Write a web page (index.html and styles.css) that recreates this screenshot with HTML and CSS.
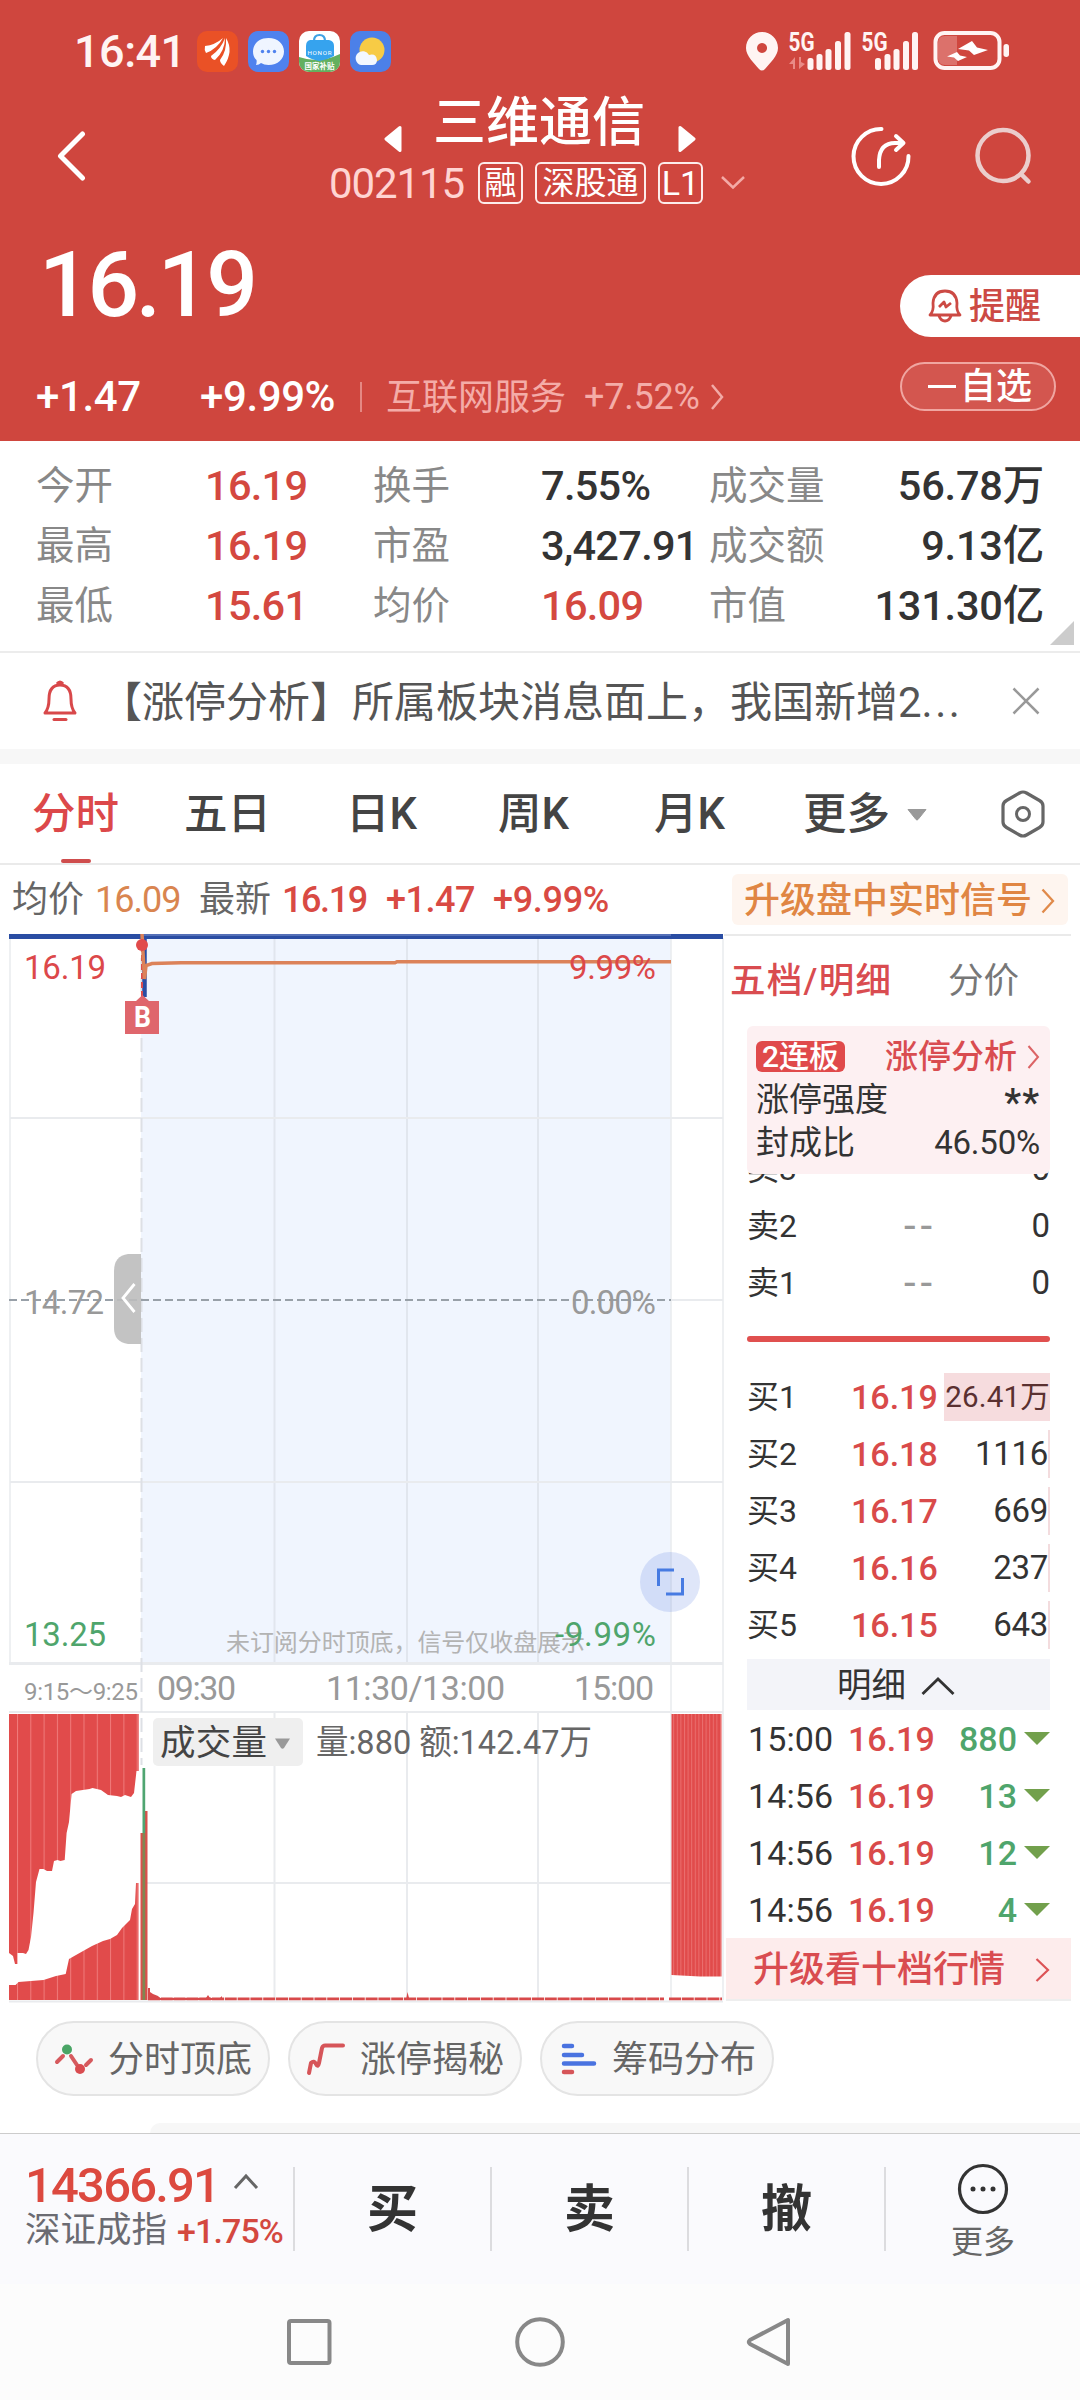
FILE: index.html
```html
<!DOCTYPE html>
<html lang="zh-CN">
<head>
    <meta charset="UTF-8">
    <meta name="viewport" content="width=device-width, initial-scale=1.0">
    <title>三维通信 002115</title>
    <link rel="stylesheet" href="styles.css">
</head>
<body>
    <header class="header">
        <div class="status-bar">
            <span class="clock">16:41</span>
            <svg class="app-icon" viewBox="0 0 41 41">
                <rect width="41" height="41" rx="10" fill="#ea5126"/>
                <path d="M8 15 Q18 14 26 7 Q20 18 9 22 Q7 19 8 15Z M14 25 Q24 18 28 7 Q28 20 18 29 Q14 28 14 25Z M23 29 Q30 20 29 7 Q37 20 27 35 Q23 32 23 29Z" fill="#fff"/>
            </svg>
            <svg class="app-icon" viewBox="0 0 41 41">
                <rect width="41" height="41" rx="10" fill="#4f82ee"/>
                <path d="M20.500 7 C30 7 36 13 36 20.500 C36 28 30 34 20.500 34 Q16 34 13 32 Q11 34 8 34 Q9 31 8.500 29 Q5 26 5 20.500 C5 13 11 7 20.500 7Z" fill="#eff5ff"/>
                <circle cx="14.500" cy="20.500" r="1.700" fill="#4f82ee"/><circle cx="20.500" cy="20.500" r="1.700" fill="#4f82ee"/><circle cx="26.500" cy="20.500" r="1.700" fill="#4f82ee"/>
            </svg>
            <svg class="app-icon" viewBox="0 0 41 41">
                <rect width="41" height="41" rx="10" fill="#fff"/>
                <path d="M0 26 Q20 33 41 23 V31 A10 10 0 0 1 31 41 H10 A10 10 0 0 1 0 31Z" fill="#64b05f"/>
                <path d="M15 10 Q15 4 20.500 4 Q26 4 26 10" fill="none" stroke="#3fa2e4" stroke-width="2.200"/>
                <path d="M11 9 H30 Q35 10 35 15 V25 Q28 29 20.500 30 Q13 29 7 25 V15 Q7 10 11 9Z" fill="#36a3ee"/>
                <text x="20.500" y="24" font-size="6.200" fill="#fff" text-anchor="middle" textLength="24">HONOR</text>
                <text x="20.500" y="38" font-size="7.500" font-weight="700" fill="#fff" text-anchor="middle">国家补贴</text>
            </svg>
            <svg class="app-icon" viewBox="0 0 41 41">
                <rect width="41" height="41" rx="10" fill="#4c80e8"/>
                <circle cx="22" cy="19" r="12.500" fill="#f7cb45"/>
                <path d="M11 34 A7 7 0 0 1 8 22 A7 7 0 0 1 19 24 Q26 22 27 29 Q27 34 22 34Z" fill="#f3f8ff"/>
            </svg>
            <svg class="signal" width="266" height="42" viewBox="745 30 266 42">
                <path fill-rule="evenodd" d="M762 32 C771 32 778 39 778 48 C778 56 770 63 765 69 Q762 72 759 69 C754 63 746 56 746 48 C746 39 753 32 762 32Z M762 43 a5 5 0 1 0 .1 0Z" fill="#fff4f3"/>
                <g fill="#fff4f3" font-size="25" font-weight="700">
                    <text x="788.500" y="51" textLength="26" lengthAdjust="spacingAndGlyphs">5G</text>
                    <text x="861.500" y="51" textLength="26" lengthAdjust="spacingAndGlyphs">5G</text>
                </g>
                <path d="M789 64 L795 57 V69 H793 V64Z M805 64 L799 69 V57 H801 V62Z" fill="#e98b86"/>
                <g fill="#fff4f3">
                    <rect x="807.500" y="58" width="6" height="12" rx="2.500"/><rect x="816.500" y="54" width="6" height="16" rx="2.500"/><rect x="825.500" y="49" width="6" height="21" rx="2.500"/><rect x="835" y="41" width="6" height="29" rx="2.500"/><rect x="844.500" y="32" width="6" height="38" rx="2.500"/>
                    <rect x="875" y="58" width="6" height="12" rx="2.500"/><rect x="884.500" y="54" width="6" height="16" rx="2.500"/><rect x="893.500" y="49" width="6" height="21" rx="2.500"/><rect x="903" y="41" width="6" height="29" rx="2.500"/><rect x="912" y="32" width="6" height="38" rx="2.500"/>
                </g>
                <path d="M945 36 H957 V65 H945 Q938 65 938 58 V43 Q938 36 945 36Z" fill="#dc716b"/>
                <rect x="935.500" y="33" width="64" height="35" rx="9" fill="none" stroke="#fff4f3" stroke-width="4"/>
                <rect x="1003.500" y="44" width="5.500" height="13" rx="2.700" fill="#fff4f3"/>
                <path d="M972 41 L958 49 L969 50.500 L974 55 L988 50 L977 47.500Z M957 52 L947 56.500 L954 57.500 L958 61 L967 57 L960 55.500Z" fill="#fff"/>
            </svg>
        </div>

        <div class="nav-row">
            <svg class="back" width="30" height="52" viewBox="57 130 30 52"><path d="M82.500 134 L60.500 156 L82.500 178" class="line white w5"/></svg>
            <div class="stock">
                <div class="stock-name">
                    <svg width="18" height="28" viewBox="0 0 18 28"><path d="M2 14 L16 2.500 V25.500Z" fill="#fff" stroke="#fff" stroke-width="3" stroke-linejoin="round"/></svg>
                    <h1>三维通信</h1>
                    <svg width="18" height="28" viewBox="0 0 18 28"><path d="M16 14 L2 2.500 V25.500Z" fill="#fff" stroke="#fff" stroke-width="3" stroke-linejoin="round"/></svg>
                </div>
                <div class="stock-code">
                    <span class="code">002115</span>
                    <span class="tag">融</span><span class="tag tag-wide">深股通</span><span class="tag tag-l1">L1</span>
                    <svg width="26" height="16" viewBox="0 0 26 16"><path d="M2 2 L13 12.500 L24 2" fill="none" stroke="#f4aaa6" stroke-width="2.500"/></svg>
                </div>
            </div>
            <svg class="share" width="62" height="62" viewBox="850 125 62 62">
                <path d="M881.500 129 A27.500 27.500 0 1 0 908.500 156" class="line white w4"/>
                <path d="M879 167 V160 Q880 143 895 143 H903 M896 136 L903.500 143 L896 150" class="line white w4"/>
            </svg>
            <svg class="search" width="60" height="62" viewBox="973 125 60 62">
                <circle cx="1003" cy="155.500" r="25.500" fill="none" stroke="#ebcdcc" stroke-width="4.500"/>
                <path d="M1021 174 L1028.500 181.500" class="line" stroke="#ebcdcc" stroke-width="4.500"/>
            </svg>
        </div>

        <div class="quote">
            <div class="price">16.19</div>
            <div class="changes">
                <span class="chg">+1.47</span><span class="pct">+9.99%</span>
                <i class="bar"></i>
                <span class="sector">互联网服务</span><span class="sector-pct">+7.52%</span>
                <svg width="15" height="26" viewBox="0 0 15 26"><path d="M2 1 L12 13 L2 25" fill="none" stroke="#f2aaa6" stroke-width="2.500"/></svg>
            </div>
        </div>
        <div class="actions">
            <div class="remind">
                <svg width="34" height="36" viewBox="0 0 34 36"><path d="M2 27 Q6 23 5 15 Q6 3 17 3 Q28 3 29 15 Q28 23 32 27Z M11 28 Q13 33 17 33 Q21 33 23 28 M11 19 L16 14 L18 19 L23 15" fill="none" stroke="#cc4a44" stroke-width="2.800" stroke-linejoin="round"/></svg>
                <span>提醒</span>
            </div>
            <div class="fav"><i></i><span>自选</span></div>
        </div>
    </header>

    <section class="stats">
        <span class="k">今开</span><span class="v red">16.19</span><span class="k">换手</span><span class="v">7.55%</span><span class="k">成交量</span><span class="v end">56.78万</span>
        <span class="k">最高</span><span class="v red">16.19</span><span class="k">市盈</span><span class="v">3,427.91</span><span class="k">成交额</span><span class="v end">9.13亿</span>
        <span class="k">最低</span><span class="v red">15.61</span><span class="k">均价</span><span class="v red">16.09</span><span class="k">市值</span><span class="v end">131.30亿</span>
        <i class="corner"></i>
    </section>

    <section class="notice">
        <svg width="36" height="44" viewBox="0 0 36 44"><path d="M3 34 Q7 29 7 20 Q7 6 18 6 Q29 6 29 20 Q29 29 33 34Z M15 5 Q18 1 21 5" fill="none" stroke="#d8484a" stroke-width="3" stroke-linejoin="round"/><path d="M12 40.500 H24" stroke="#d8484a" stroke-width="3" stroke-linecap="round"/></svg>
        <span class="notice-text">【涨停分析】所属板块消息面上，我国新增2<span class="dots">...</span></span>
        <svg width="28" height="28" viewBox="0 0 28 28"><path d="M1.500 1.500 L26.500 26.500 M26.500 1.500 L1.500 26.500" stroke="#999" stroke-width="2.500"/></svg>
    </section>

    <nav class="tabs">
        <span class="tab active">分时</span><span class="tab">五日</span><span class="tab">日K</span><span class="tab">周K</span><span class="tab">月K</span>
        <span class="tab">更多<svg width="22" height="14" viewBox="0 0 22 14"><path d="M2 1.500 H20 L12 11.500 Q11 12.500 10 11.500Z" fill="#999" stroke="#999" stroke-linejoin="round"/></svg></span>
        <svg class="gear" width="46" height="50" viewBox="0 0 46 50"><path d="M19.500 4 Q23 2 26.500 4 L39.500 11.500 Q43 13.500 43 17 V33 Q43 36.500 39.500 38.500 L26.500 46 Q23 48 19.500 46 L6.500 38.500 Q3 36.500 3 33 V17 Q3 13.500 6.500 11.500Z" fill="none" stroke="#666" stroke-width="3.200"/><circle cx="23" cy="25" r="6.500" fill="none" stroke="#666" stroke-width="3"/></svg>
    </nav>

    <div class="info">
        <span class="lbl">均价</span><span class="num orange">16.09</span>
        <span class="lbl second">最新</span><span class="num n1">16.19</span><span class="num n2">+1.47</span><span class="num n3">+9.99%</span>
        <div class="upgrade-top">升级盘中实时信号<svg width="14" height="26" viewBox="0 0 14 26"><path d="M1.500 1.500 L12 13 L1.500 24.500" fill="none" stroke="#e08a4a" stroke-width="2.300"/></svg></div>
    </div>

    <main class="board">
        <svg class="chart" width="724" height="1069" viewBox="0 934 724 1069">
            <defs>
                <pattern id="stripes" width="3.600" height="10" patternUnits="userSpaceOnUse"><rect width="3.600" height="10" fill="#e14b4b"/><rect width="1" height="10" fill="#ea6f6f"/></pattern>
                <pattern id="auction" x="17" width="13.300" height="10" patternUnits="userSpaceOnUse"><rect width="13.300" height="10" fill="#e14b4b"/><rect width="1" height="10" fill="#f07b7b"/></pattern>
            </defs>
            <rect x="141" y="939" width="530" height="724" fill="#f0f5fe"/>

            <!-- grid -->
            <g stroke="#e9ebee" stroke-width="2" fill="none">
                <path d="M10 938 V1663 M723 938 V2000 M671 938 V2000" stroke-width="1.500"/>
                <path d="M274.500 938 V1663 M407 938 V1663 M538 938 V1663" stroke="#e1e6ee"/>
                <path d="M10 1118 H723 M10 1482 H723 M671 1300 H723"/>
                <path d="M9 1663.500 H723" stroke-width="3"/>
                <path d="M274.500 1713 V2000 M407 1713 V2000 M538 1713 V2000 M141 1883 H671 M9 1712 H723 M9 2001.500 H723"/>
                <path d="M141.500 938 V1765" stroke="#dde0e5" stroke-dasharray="14 6"/>
            </g>
            <path d="M9 1300 H671" stroke="#98a0a8" stroke-width="2" stroke-dasharray="8 4"/>

            <!-- price line -->
            <path d="M9 936.500 H723" stroke="#2a4da3" stroke-width="5"/>
            <path d="M142 935 H671" stroke="#8095cd" stroke-width="1"/>
            <path d="M144.500 938 V997" stroke="#2a4da3" stroke-width="4.500"/>
            <path d="M142 946 V1000" stroke="#dc4c4c" stroke-width="2" stroke-dasharray="6 3"/>
            <path d="M142 934 L144.500 979 L146 965.500 L152 963.500 L181 962.800 H395 L397 961.800 H671" fill="none" stroke="#dc8259" stroke-width="3.500"/>
            <circle cx="142" cy="945" r="6" fill="#e14b4b"/>
            <path d="M125 1001 H136 L142.500 995 L149 1001 H159 V1034 H125Z" fill="#df666c"/>
            <text x="134" y="1027" class="mark" textLength="17" lengthAdjust="spacingAndGlyphs">B</text>

            <g class="axis">
                <text x="24" y="979" class="up" textLength="82">16.19</text>
                <text x="569" y="979" class="up" textLength="87">9.99%</text>
                <text x="24" y="1314" textLength="80">14.72</text>
                <text x="571" y="1314" textLength="85">0.00%</text>
                <text x="24" y="1646" class="down" textLength="82">13.25</text>
                <text x="226" y="1651" class="tip" textLength="359">未订阅分时顶底，信号仅收盘展示</text>
                <text x="555" y="1646" class="down" textLength="101">-9.99%</text>
            </g>
            <path d="M141 1254 H128 Q114 1256 114 1271 V1328 Q114 1342 128 1344 H141Z" fill="#bdbdbd" fill-opacity=".9"/>
            <path d="M134.500 1284 L123 1298 L134.500 1312" fill="none" stroke="#fff" stroke-width="2.800"/>
            <circle cx="670" cy="1582" r="30" fill="#4169dc" fill-opacity=".17"/>
            <path d="M658.500 1586 V1570 H674 M682.500 1578 V1594 H666" fill="none" stroke="#477be2" stroke-width="3"/>

            <g class="time">
                <text x="24" y="1700" class="small" textLength="114">9:15～9:25</text>
                <text x="157" y="1700" textLength="79">09:30</text>
                <text x="326" y="1700" textLength="179">11:30/13:00</text>
                <text x="574" y="1700" textLength="80">15:00</text>
            </g>

            <!-- volume -->
            <path fill="url(#auction)" d="M9 1714 V1953 L13 1956 L15 1964 H17.500 V1953 H23 L26 1954 L28.500 1950 L31 1937 L33.500 1913 L36 1882 L39.500 1869 H43.500 L47 1871 H52 L54 1861 L57.500 1860 L60.500 1861 L64.700 1860 L66.600 1833 L69 1822 L71.600 1794 L76 1791 L89.500 1789 L92.500 1788 L101 1790 L108 1795 L117 1796 L121 1797 L125 1795 L131 1797 L134 1793 L136.500 1771 H138.700 V1714Z"/>
            <path fill="url(#auction)" d="M9 2000 V1985 H15.500 L18.500 1982 L43.500 1980 L56 1976 L65.700 1974 L69 1959 L76 1955 L92 1946 L103 1941 L110 1939 L117 1935 L122 1928 L130 1920 L132 1909 L135 1904 L136 1883 H138.500 V2000Z"/>
            <rect x="140.500" y="1833" width="3" height="167" fill="#d9504c"/>
            <rect x="144.500" y="1811" width="3" height="189" fill="#d9504c"/>
            <rect x="142.500" y="1768" width="2.700" height="65" fill="#4fa571"/>
            <rect x="142.500" y="1833" width="2.700" height="167" fill="#7f8752"/>
            <path d="M148 2000 V1988 H150 V1992 L153 1994 L158 1996 L160 1998 H206 L208 1995 L210 1998 H220 L222 1996 V2000Z M406 2000 L407.500 1992 L409.500 2000Z" fill="#d8494a"/>
            <path d="M148 1998.800 H664 M669 1998.800 H722" stroke="#d8494a" stroke-width="2.800" stroke-dasharray="12 .8"/>
            <path d="M671.500 1714 H721.500 V1976.500 H700 L671.500 1975Z" fill="url(#stripes)"/>

            <rect x="153" y="1718" width="150" height="48" rx="5" fill="#efefef"/>
            <text x="160" y="1755" class="vol-btn" textLength="107">成交量</text>
            <path d="M275 1738.500 H290 L284 1748 Q282.500 1749.500 281 1748Z" fill="#999"/>
            <text x="316" y="1754" class="vol-text" textLength="276" lengthAdjust="spacingAndGlyphs">量:880 额:142.47万</text>
        </svg>

        <aside class="depth">
            <div class="depth-tabs"><span class="on">五档/明细</span><span>分价</span></div>
            <div class="sell">
                <div class="limit-card">
                    <div class="limit-row"><span class="badge">2连板</span><span class="link">涨停分析<svg width="13" height="24" viewBox="0 0 13 24"><path d="M1.500 1 L11 12 L1.500 23" fill="none" stroke="#dc6466" stroke-width="2"/></svg></span></div>
                    <div class="limit-row r2"><span>涨停强度</span><span class="stars">**</span></div>
                    <div class="limit-row r3"><span>封成比</span><span class="ratio">46.50%</span></div>
                </div>
                <div class="row"><span class="side">卖3</span><span class="none">--</span><span class="qty">0</span></div>
                <div class="row"><span class="side">卖2</span><span class="none">--</span><span class="qty">0</span></div>
                <div class="row"><span class="side">卖1</span><span class="none">--</span><span class="qty">0</span></div>
            </div>
            <i class="split"></i>
            <div class="row buy"><span class="side">买1</span><span class="p">16.19</span><span class="qty big">26.41万</span></div>
            <div class="row buy"><span class="side">买2</span><span class="p">16.18</span><span class="qty">1116</span></div>
            <div class="row buy"><span class="side">买3</span><span class="p">16.17</span><span class="qty">669</span></div>
            <div class="row buy"><span class="side">买4</span><span class="p">16.16</span><span class="qty">237</span></div>
            <div class="row buy"><span class="side">买5</span><span class="p">16.15</span><span class="qty">643</span></div>
            <div class="detail-head">明细<svg width="34" height="20" viewBox="0 0 34 20"><path d="M1.500 18 L17 3 L32.500 18" fill="none" stroke="#333" stroke-width="2.800"/></svg></div>
            <div class="tick"><span class="t">15:00</span><span class="p">16.19</span><span class="q">880</span><i></i></div>
            <div class="tick"><span class="t">14:56</span><span class="p">16.19</span><span class="q">13</span><i></i></div>
            <div class="tick"><span class="t">14:56</span><span class="p">16.19</span><span class="q">12</span><i></i></div>
            <div class="tick"><span class="t">14:56</span><span class="p">16.19</span><span class="q">4</span><i></i></div>
            <div class="upgrade-ten">升级看十档行情<svg width="15" height="24" viewBox="0 0 15 24"><path d="M1.500 1 L13 12 L1.500 23" fill="none" stroke="#dc5356" stroke-width="2.200"/></svg></div>
        </aside>
    </main>

    <section class="tools">
        <div class="chip">
            <svg width="40" height="34" viewBox="0 0 40 34"><path d="M3 20 L9 14 M17 14 L23 23 M32 23 L37 18" stroke="#d65a5e" stroke-width="4" stroke-linecap="round"/><circle cx="13" cy="7.500" r="5" fill="#4aa566"/><circle cx="26" cy="27" r="5" fill="#d94c50"/></svg>
            <span>分时顶底</span>
        </div>
        <div class="chip">
            <svg width="40" height="34" viewBox="0 0 40 34"><path d="M3 31 L5 21 Q8 18 10 22 Q12 26 13 21 L16 6 Q17 3.500 19 3.500 H37" fill="none" stroke="#d65559" stroke-width="4" stroke-linecap="round" stroke-linejoin="round"/></svg>
            <span>涨停揭秘</span>
        </div>
        <div class="chip">
            <svg width="40" height="34" viewBox="0 0 40 34"><path d="M6 4 H14 M6 13 H24 M6 21.500 H36" stroke="#4a73e0" stroke-width="4.500" stroke-linecap="round"/><path d="M6 30 H14" stroke="#d65559" stroke-width="4.500" stroke-linecap="round"/></svg>
            <span>筹码分布</span>
        </div>
    </section>
    <div class="next-panel"></div>

    <footer class="trade-bar">
        <div class="index">
            <div class="index-value">14366.91<svg width="26" height="17" viewBox="0 0 26 17"><path d="M2 15 L13 3 L24 15" fill="none" stroke="#666" stroke-width="3"/></svg></div>
            <div class="index-name">深证成指<span>+1.75%</span></div>
        </div>
        <div class="trade">买</div>
        <div class="trade">卖</div>
        <div class="trade">撤</div>
        <div class="more">
            <svg width="52" height="52" viewBox="0 0 52 52"><circle cx="26" cy="26" r="23.500" fill="none" stroke="#333" stroke-width="3.200"/><circle cx="16" cy="26" r="2.500" fill="#333"/><circle cx="26" cy="26" r="2.500" fill="#333"/><circle cx="36" cy="26" r="2.500" fill="#333"/></svg>
            <span>更多</span>
        </div>
    </footer>

    <div class="system-nav">
        <svg width="50" height="54" viewBox="0 0 50 54"><rect x="5" y="6" width="40.500" height="42" rx="2" fill="none" stroke="#888" stroke-width="4"/></svg>
        <svg width="54" height="54" viewBox="0 0 54 54"><circle cx="27" cy="27" r="22.800" fill="none" stroke="#888" stroke-width="4"/></svg>
        <svg width="50" height="54" viewBox="0 0 50 54"><path d="M42 5 V49 L4 29 Q1.500 27 4 25Z" fill="none" stroke="#888" stroke-width="4" stroke-linejoin="round"/></svg>
    </div>
</body>
</html>
```
FILE: styles.css
```css
* {
    box-sizing: border-box;
}

body {
    margin: 0;
    width: 1080px;
    height: 2400px;
    overflow: hidden;
    background: #fff;
    color: #333;
    font-family: Roboto, "Noto Sans CJK SC", sans-serif;
    line-height: 1;
}

svg {
    display: block;
    flex: none;
}

span, h1 {
    white-space: nowrap;
}

.line {
    fill: none;
    stroke-linecap: round;
    stroke-linejoin: round;
}
.white { stroke: #fff; }
.w4 { stroke-width: 4; }
.w5 { stroke-width: 5; }

/* header */
.header {
    position: relative;
    height: 441px;
    background: #cf463e;
    color: #fff;
}
.status-bar {
    display: flex;
    align-items: flex-start;
    height: 92px;
    padding: 30px 0 0 74px;
}
.clock {
    width: 123px;
    font-size: 45px;
    line-height: 43px;
    font-weight: 500;
    color: #fff4f3;
    letter-spacing: -0.5px;
}
.app-icon {
    width: 41px;
    height: 41px;
    margin: 1px 10px 0 0;
}
.signal {
    margin-left: 344px;
    overflow: visible;
}
.nav-row {
    display: flex;
    height: 138px;
}
.back {
    margin: 38px 0 0 57px;
}
.stock {
    width: 395px;
    margin-left: 297px;
}
.stock-name {
    display: flex;
    height: 66px;
}
.stock-name svg {
    margin-top: 33px;
}
.stock-name h1 {
    width: 213px;
    margin: 0 32px 0 31px;
    font-size: 53px;
    line-height: 62px;
    font-weight: 500;
}
.stock-code {
    display: flex;
    align-items: center;
    height: 50px;
    margin-left: -55px;
}
.code {
    width: 149px;
    padding-top: 2px;
    font-size: 42px;
    color: #ffd4d2;
    letter-spacing: -1.1px;
}
.tag {
    width: 45px;
    height: 42px;
    margin-right: 12px;
    border: 2px solid #fdeceb;
    border-radius: 6px;
    font-size: 32px;
    line-height: 38px;
    text-align: center;
}
.tag-wide { width: 111px; }
.tag-l1 {
    font-size: 34px;
    margin-right: 17px;
}
.share {
    margin: 33px 0 0 71px;
}
.search {
    margin: 33px 0 0 61px;
}
.price {
    height: 106px;
    padding-left: 39px;
    font-size: 91px;
    line-height: 110px;
    font-weight: 500;
    letter-spacing: -3.3px;
}
.changes {
    display: flex;
    align-items: center;
    height: 50px;
    margin-top: 36px;
    padding-left: 36px;
    font-size: 42px;
    font-weight: 500;
    letter-spacing: -0.4px;
}
.chg { width: 164px; }
.pct { width: 160px; }
.bar {
    width: 2px;
    height: 30px;
    margin-right: 24px;
    background: #e58883;
}
.sector {
    width: 198px;
    padding-top: 2px;
    font-size: 36px;
    font-weight: 400;
    letter-spacing: 0;
    color: #f4aca8;
}
.sector-pct {
    width: 126px;
    font-size: 36px;
    font-weight: 400;
    letter-spacing: -0.2px;
    color: #f4aca8;
}
.actions {
    position: absolute;
    top: 275px;
    right: 0;
    width: 180px;
}
.remind {
    display: flex;
    align-items: center;
    height: 62px;
    padding-left: 28px;
    border-radius: 31px 0 0 31px;
    background: #fff;
    color: #cc4a44;
    font-size: 36px;
    font-weight: 500;
}
.remind span { margin-left: 7px; padding-top: 1px; }
.fav {
    display: flex;
    align-items: center;
    width: 156px;
    height: 49px;
    margin-top: 25px;
    padding-left: 26px;
    border: 2px solid #f0a6a1;
    border-radius: 25px;
    background: #d3564f;
    font-size: 36px;
    font-weight: 500;
}
.fav i {
    width: 28px;
    height: 3px;
    margin-right: 4px;
    background: #fff;
}

/* key figures */
.stats {
    position: relative;
    display: grid;
    grid-template-columns: 169px 168px 168px 168px 138px 1fr;
    grid-auto-rows: 60px;
    align-items: center;
    height: 212px;
    padding: 15px 36px 0;
    border-bottom: 2px solid #ececec;
}
.k {
    padding-top: 1px;
    font-size: 38.5px;
    color: #888;
}
.v {
    font-size: 41.5px;
    font-weight: 500;
    letter-spacing: -0.7px;
}
.end {
    text-align: right;
    letter-spacing: -0.2px;
}
.red { color: #d4483f; }
.corner {
    position: absolute;
    right: 6px;
    bottom: 6px;
    border-left: 24px solid transparent;
    border-bottom: 24px solid #ccc;
}

.notice {
    display: flex;
    align-items: center;
    height: 96px;
    padding-left: 42px;
}
.notice-text {
    width: 912px;
    margin-left: 22px;
    padding-top: 4px;
    font-size: 42px;
    color: #555;
}
.dots { letter-spacing: 2.5px; }

/* period tabs */
.tabs {
    display: flex;
    align-items: center;
    height: 116px;
    padding-left: 32px;
    border-top: 15px solid #f7f7f7;
    border-bottom: 2px solid #eaeaea;
}
.tab {
    position: relative;
    display: flex;
    align-items: center;
    height: 99px;
    padding-top: 2px;
    font-size: 43.5px;
    font-weight: 500;
    line-height: 97px;
    color: #444;
}
.tab:nth-child(1) { width: 152px; }
.tab:nth-child(2) { width: 162px; }
.tab:nth-child(3) { width: 152px; }
.tab:nth-child(4) { width: 156px; }
.tab:nth-child(5) { width: 149px; }
.tab:nth-child(6) { width: 197px; }
.tab svg { margin-left: 16px; }
.tab.active { color: #dc484a; }
.tab.active::after {
    content: "";
    position: absolute;
    left: 29px;
    bottom: 0;
    width: 30px;
    height: 4px;
    border-radius: 2px;
    background: #cf4d4d;
}

.info {
    display: flex;
    align-items: center;
    height: 69px;
    padding-left: 12px;
    font-size: 36px;
}
.lbl { width: 83px; padding-top: 1px; color: #666; }
.num {
    width: 104px;
    color: #d94a43;
    font-weight: 500;
    letter-spacing: -1px;
}
.orange { color: #d98550; font-weight: 400; }
.n1 { letter-spacing: -1.4px; }
.n2 { width: 107px; letter-spacing: -0.5px; }
.n3 { width: 239px; letter-spacing: -0.3px; }
.upgrade-top {
    display: flex;
    align-items: center;
    width: 336px;
    height: 51px;
    padding: 2px 0 0 12px;
    border-radius: 6px;
    background: #fef5ef;
    color: #e08643;
    font-weight: 500;
    white-space: nowrap;
}
.upgrade-top svg { margin-left: 9px; }

/* chart */
.board {
    display: flex;
    height: 1069px;
}
.chart { overflow: hidden; }
.axis {
    font-size: 33px;
    fill: #999;
}
.axis .up { fill: #dc484a; }
.axis .down { fill: #4fa56c; }
.axis .tip { font-size: 24px; fill: #b3b3b3; }
.time {
    font-size: 34px;
    fill: #999;
}
.time .small { font-size: 24px; }
.mark {
    font-size: 29px;
    font-weight: 700;
    fill: #fff;
}
.vol-btn { font-size: 35.5px; fill: #444; }
.vol-text { font-size: 34px; fill: #666; }

/* order book */
.depth {
    width: 347px;
    border-top: 2px solid #eaeaea;
}
.depth-tabs {
    display: flex;
    align-items: center;
    height: 90px;
    padding: 2px 0 0 6px;
    font-size: 35.5px;
    color: #777;
}
.depth-tabs .on {
    width: 218px;
    color: #d94c50;
    font-weight: 500;
    letter-spacing: 1.3px;
}
.sell {
    position: relative;
    height: 310px;
    padding: 114px 21px 0 23px;
}
.limit-card {
    position: absolute;
    top: 0;
    left: 23px;
    width: 303px;
    height: 148px;
    padding: 11px 10px 0 9px;
    border-radius: 6px;
    background: #fdf0f2;
    font-size: 33px;
    z-index: 1;
}
.limit-row {
    display: flex;
    align-items: center;
    justify-content: space-between;
    height: 41px;
}
.limit-row:first-child { height: 39px; }
.r2 { height: 47px; }
.r3 { height: 38px; }
.badge {
    width: 89px;
    height: 31px;
    border-radius: 6px;
    background: #e04a4b;
    color: #fff;
    font-size: 30px;
    font-weight: 500;
    line-height: 31px;
    text-align: center;
}
.link {
    display: flex;
    align-items: center;
    color: #d94c50;
    font-weight: 500;
}
.link svg { margin-left: 10px; }
.stars {
    padding-top: 7px;
    font-size: 38px;
    font-weight: 500;
    letter-spacing: 1px;
}
.ratio { letter-spacing: -0.2px; }
.row {
    display: flex;
    align-items: center;
    height: 57px;
    font-size: 33px;
}
.side {
    width: 105px;
    font-size: 32px;
}
.row .none {
    width: 95px;
    padding-left: 52px;
    color: #999;
    font-size: 42px;
    letter-spacing: 5px;
}
.qty {
    flex: 1;
    text-align: right;
}
.split {
    display: block;
    width: 303px;
    height: 6px;
    margin: 0 0 26px 23px;
    border-radius: 3px;
    background: #e0504f;
}
.buy {
    width: 303px;
    margin-left: 23px;
}
.p {
    width: 92px;
    color: #d94a4a;
    font-size: 34px;
    font-weight: 500;
}
.buy .p { margin-left: -1px; width: 93px; }
.buy .qty {
    height: 48px;
    line-height: 48px;
    font-size: 33px;
    letter-spacing: -0.3px;
    border-right: 2px solid #f3dcde;
}
.buy .big {
    padding: 0;
    border: 0;
    background: #f6dcde;
    color: #5a3030;
    font-size: 29.5px;
    letter-spacing: 0.2px;
}
.detail-head {
    display: flex;
    align-items: center;
    justify-content: center;
    width: 303px;
    height: 51px;
    margin: 6px 0 0 20px;
    margin-left: 23px;
    padding: 2px 5px 0 0;
    background: #f3f4f9;
    font-size: 34.5px;
}
.detail-head svg { margin-left: 15px; }
.tick {
    display: flex;
    align-items: center;
    height: 57px;
    padding-left: 24px;
    font-size: 34px;
}
.t { width: 100px; letter-spacing: 0.1px; }
.q {
    width: 77px;
    text-align: right;
    color: #4fa56c;
    font-weight: 500;
}
.tick i {
    margin-left: 7px;
    border: 13px solid transparent;
    border-top: 13px solid #72a04c;
    border-bottom: 0;
}
.upgrade-ten {
    display: flex;
    align-items: center;
    height: 63px;
    margin-left: 2px;
    padding: 3px 0 0 27px;
    background: #fdecec;
    border-bottom: 2px solid #eee;
    color: #d94c50;
    font-size: 36px;
    font-weight: 500;
}
.upgrade-ten svg { margin-left: 30px; }

/* tool chips */
.tools {
    display: flex;
    gap: 18px;
    height: 120px;
    padding: 18px 0 0 36px;
}
.chip {
    display: flex;
    align-items: center;
    width: 234px;
    height: 75px;
    padding-left: 16px;
    border: 2px solid #e4e4e4;
    border-radius: 38px;
    background: #f8f8f8;
    color: #666;
    font-size: 36px;
}
.chip span { margin-left: 14px; padding-top: 3px; }
.next-panel {
    height: 10px;
    margin-left: 150px;
    border-radius: 10px 0 0 0;
    background: #f7f7f7;
}

/* trade bar */
.trade-bar {
    display: flex;
    height: 151px;
    padding-top: 33px;
    border-top: 1px solid #ccc;
    background: #fafafd;
}
.index {
    width: 293px;
    padding-left: 25px;
}
.index-value {
    display: flex;
    height: 36px;
    font-size: 49px;
    line-height: 37px;
    font-weight: 500;
    letter-spacing: -1.8px;
    color: #dc493f;
}
.index-value svg { margin: 6px 0 0 14px; }
.index-name {
    display: flex;
    align-items: center;
    height: 40px;
    margin-top: 8px;
    font-size: 35.5px;
    color: #6b6b72;
    white-space: nowrap;
}
.index-name span {
    margin-left: 10px;
    font-size: 34px;
    font-weight: 500;
    letter-spacing: -0.9px;
    color: #d4483f;
}
.trade {
    width: 197px;
    height: 84px;
    padding-top: 1px;
    border-left: 2px solid #dcdcdf;
    font-size: 51px;
    font-weight: 700;
    line-height: 84px;
    text-align: center;
}
.more {
    display: flex;
    flex-direction: column;
    align-items: center;
    width: 196px;
    height: 84px;
    border-left: 2px solid #dcdcdf;
    font-size: 32px;
    color: #666;
}
.more svg { margin: -4px 0 11px; }

.system-nav {
    display: flex;
    align-items: center;
    justify-content: center;
    gap: 179px;
    height: 116px;
    background: #fcfcfc;
}
```
